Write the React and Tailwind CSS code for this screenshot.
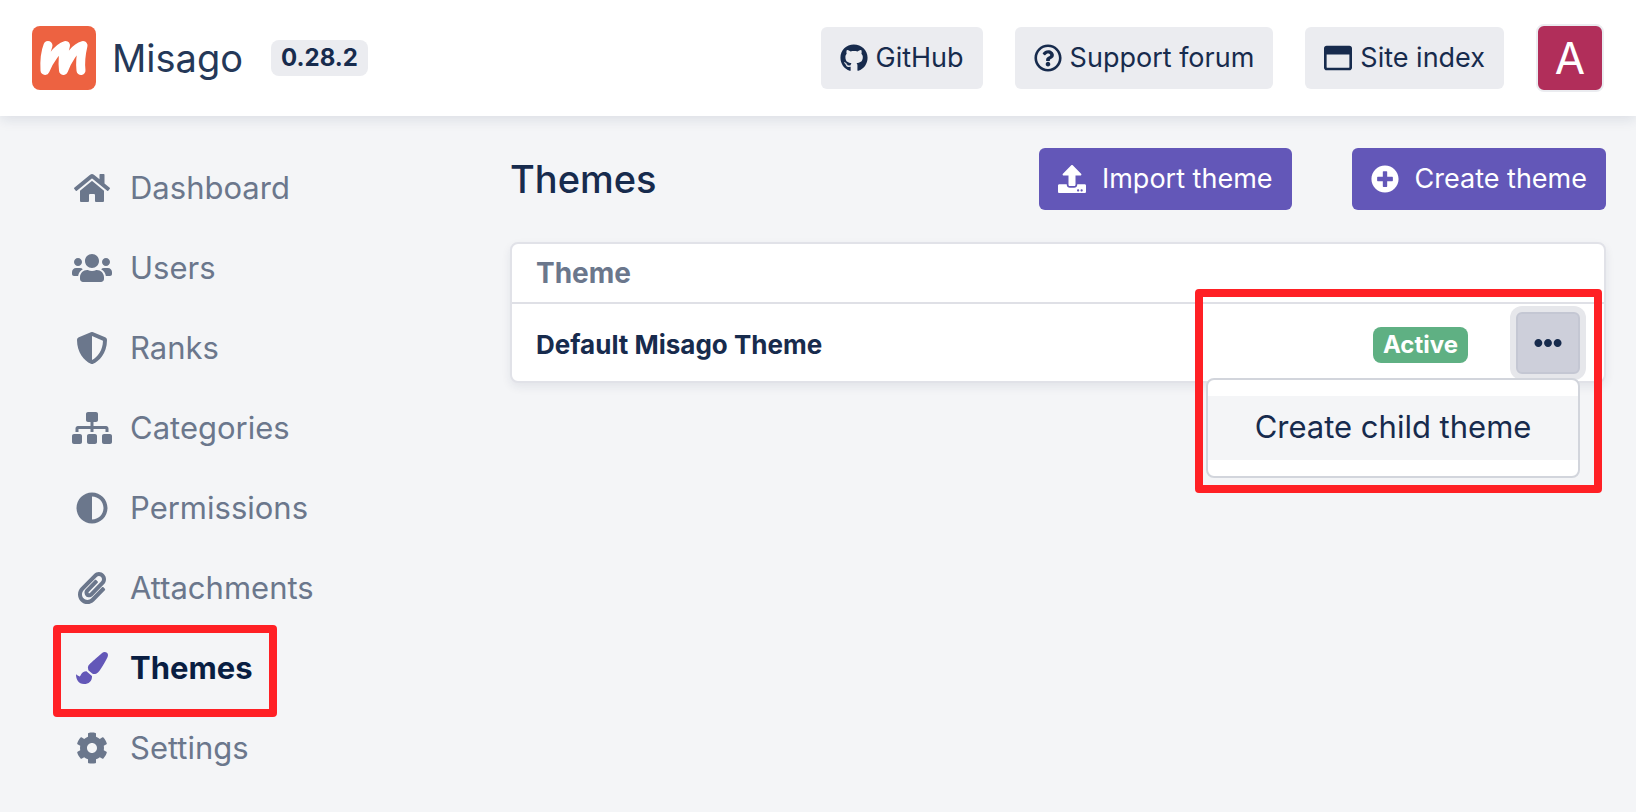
import React from 'react';
import {
  FaAdjust,
  FaCog,
  FaEllipsisH,
  FaGithub,
  FaHome,
  FaPaintBrush,
  FaPaperclip,
  FaPlusCircle,
  FaRegQuestionCircle,
  FaRegWindowMaximize,
  FaShieldAlt,
  FaSitemap,
  FaUpload,
  FaUsers,
} from 'react-icons/fa';

const navItems = [
  { name: 'Dashboard', icon: FaHome },
  { name: 'Users', icon: FaUsers },
  { name: 'Ranks', icon: FaShieldAlt },
  { name: 'Categories', icon: FaSitemap },
  { name: 'Permissions', icon: FaAdjust },
  { name: 'Attachments', icon: FaPaperclip },
  { name: 'Themes', icon: FaPaintBrush, active: true },
  { name: 'Settings', icon: FaCog },
];

const headerLinks = [
  { name: 'GitHub', icon: FaGithub },
  { name: 'Support forum', icon: FaRegQuestionCircle },
  { name: 'Site index', icon: FaRegWindowMaximize },
];

function Logo() {
  return (
    <svg viewBox="0 0 64 64" className="w-16 h-16 rounded-lg bg-[#ed6241]" aria-hidden="true">
      <path
        d="M16 19.500 C13 27 12.500 36 13 44.500 C17 35 25 22 33.500 19.500 C31 28 30.500 36 31.500 44.500 C35 35 42 22 51 19.500 C49 28 48 36 49 44.500"
        fill="none"
        stroke="#fff"
        strokeWidth="9"
        strokeLinecap="round"
        strokeLinejoin="round"
      />
    </svg>
  );
}

function Header() {
  return (
    <header className="relative flex items-center justify-between h-[116px] px-8 bg-white shadow-[0_4px_12px_rgba(23,43,77,0.1)]">
      <a href="#" className="flex items-center">
        <Logo />
        <span className="ml-4 text-[38px] leading-12 text-[#253858]">Misago</span>
        <span className="ml-7 px-[10px] rounded-lg bg-[#ebecf0] text-2xl leading-9 font-bold">0.28.2</span>
      </a>

      <div className="flex items-center gap-8">
        {headerLinks.map(({ name, icon: Icon }) => (
          <a key={name} href="#" className="flex items-center gap-2 h-[62px] px-[19px] rounded-md bg-[#ebecf0] text-[27px]">
            <Icon className="w-7 h-7" />
            {name}
          </a>
        ))}
        <button
          type="button"
          className="w-[68px] h-[68px] rounded-lg border-2 border-[#ebecf0] bg-[#b12e5a] text-white text-[44px] leading-none"
        >
          A
        </button>
      </div>
    </header>
  );
}

function Sidebar() {
  return (
    <nav className="w-[510px] shrink-0 pl-[72px]">
      <ul>
        {navItems.map(({ name, icon: Icon, active }) => (
          <li key={name} className="relative">
            <a
              href="#"
              className={
                active
                  ? 'flex items-center gap-[18px] h-20 text-[31px] font-bold text-[#091e42]'
                  : 'flex items-center gap-[18px] h-20 text-[31px] text-[#6b778c]'
              }
            >
              <Icon className={active ? 'w-10 h-8 text-[#6357b8]' : 'w-10 h-8'} />
              {name}
            </a>
            {active && (
              <div className="absolute -left-[19px] -top-[3px] w-[224px] h-[92px] rounded-[4px] border-8 border-[#ff2025] pointer-events-none" />
            )}
          </li>
        ))}
      </ul>
    </nav>
  );
}

function ThemeOptions() {
  return (
    <div className="relative">
      <button
        type="button"
        aria-label="Options"
        className="flex items-center justify-center w-16 h-[62px] rounded-md border-2 border-[#c4c7d3] bg-[#cdcfda] ring-6 ring-[#e6e7eb]"
      >
        <FaEllipsisH className="w-7 h-7" />
      </button>
      {/* Dropdown menu */}
      <div className="absolute right-0 top-full mt-1 w-[374px] py-4 rounded-lg border-2 border-[#d2d5dc] bg-white">
        <a href="#" className="flex items-center justify-center h-16 bg-[#f4f5f7] text-[31px] text-[#172b4d]">
          Create child theme
        </a>
      </div>
      {/* Highlight frame */}
      <div className="absolute -right-[22px] -top-[23px] w-[407px] h-[204px] rounded-[4px] border-8 border-[#ff2025] pointer-events-none" />
    </div>
  );
}

function ThemesTable() {
  return (
    <div className="mt-8 rounded-lg border-2 border-[#e1e2e8] bg-white shadow-[0_4px_10px_rgba(23,43,77,0.08)]">
      <table className="w-full text-left">
        <thead>
          <tr className="border-b-2 border-[#dfe0e6]">
            <th colSpan={3} className="h-[59px] px-6 text-[28px] font-bold text-[#6b778c]">
              Theme
            </th>
          </tr>
        </thead>
        <tbody>
          <tr className="h-[78px]">
            <td className="pl-6 pt-1 text-[26px] font-bold">Default Misago Theme</td>
            <td className="w-px pr-12 pt-1">
              <span className="block px-[10px] rounded-lg bg-[#5fb083] text-2xl leading-9 font-bold text-white">Active</span>
            </td>
            <td className="w-px pr-6">
              <ThemeOptions />
            </td>
          </tr>
        </tbody>
      </table>
    </div>
  );
}

export default function App() {
  return (
    <div className="min-h-screen bg-[#f4f5f7] text-[#172b4d] font-['Inter',sans-serif]">
      <Header />
      <div className="flex pt-8 pr-[30px]">
        <Sidebar />
        <main className="flex-1 min-w-0">
          <div className="flex items-center h-[62px]">
            <h1 className="flex-1 text-[38px] font-medium">Themes</h1>
            <div className="flex gap-[60px]">
              <a href="#" className="flex items-center gap-4 h-[62px] px-[19px] rounded-md bg-[#6357b8] text-[27px] text-white">
                <FaUpload className="w-7 h-7" />
                Import theme
              </a>
              <a href="#" className="flex items-center gap-4 h-[62px] px-[19px] rounded-md bg-[#6357b8] text-[27px] text-white">
                <FaPlusCircle className="w-7 h-7" />
                Create theme
              </a>
            </div>
          </div>
          <ThemesTable />
        </main>
      </div>
    </div>
  );
}
